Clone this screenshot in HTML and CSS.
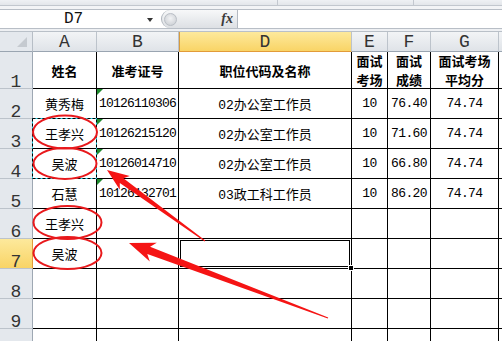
FILE: index.html
```html
<!DOCTYPE html>
<html lang="zh">
<head>
    <meta charset="UTF-8">
    <title>成绩表</title>
    <link rel="stylesheet" href="styles.css">
</head>
<body>
<div class="app">
    <div class="topstrip">
        <div class="seg seg1"></div>
        <div class="seg seg2"></div>
    </div>
    <div class="gap"></div>
    <div class="formula-bar">
        <div class="namebox"><span class="namebox-text">D7</span><span class="drop"></span></div>
        <div class="fx-pill"><span class="knob"></span><span class="fx">fx</span></div>
        <div class="formula-input"></div>
    </div>
    <div class="strip2"></div>

    <div class="sheet">
        <div class="corner"></div>
        <div class="ch">A</div>
        <div class="ch">B</div>
        <div class="ch sel">D</div>
        <div class="ch">E</div>
        <div class="ch">F</div>
        <div class="ch">G</div>
        <div class="ch last"></div>

        <div class="rh">1</div>
        <div class="c head">姓名</div>
        <div class="c head">准考证号</div>
        <div class="c head">职位代码及名称</div>
        <div class="c head">面试<br>考场</div>
        <div class="c head">面试<br>成绩</div>
        <div class="c head">面试考场<br>平均分</div>
        <div class="c last"></div>

        <div class="rh">2</div>
        <div class="c">黄秀梅</div>
        <div class="c id flag">10126110306</div>
        <div class="c mix">02办公室工作员</div>
        <div class="c num">10</div>
        <div class="c num">76.40</div>
        <div class="c num">74.74</div>
        <div class="c last"></div>

        <div class="rh">3</div>
        <div class="c">王孝兴</div>
        <div class="c id flag">10126215120</div>
        <div class="c mix">02办公室工作员</div>
        <div class="c num">10</div>
        <div class="c num">71.60</div>
        <div class="c num">74.74</div>
        <div class="c last"></div>

        <div class="rh">4</div>
        <div class="c">吴波</div>
        <div class="c id flag">10126014710</div>
        <div class="c mix">02办公室工作员</div>
        <div class="c num">10</div>
        <div class="c num">66.80</div>
        <div class="c num">74.74</div>
        <div class="c last"></div>

        <div class="rh">5</div>
        <div class="c">石慧</div>
        <div class="c id flag">10126132701</div>
        <div class="c mix">03政工科工作员</div>
        <div class="c num">10</div>
        <div class="c num">86.20</div>
        <div class="c num">74.74</div>
        <div class="c last"></div>

        <div class="rh">6</div>
        <div class="c">王孝兴</div>
        <div class="c"></div>
        <div class="c"></div>
        <div class="c"></div>
        <div class="c"></div>
        <div class="c"></div>
        <div class="c last"></div>

        <div class="rh sel">7</div>
        <div class="c">吴波</div>
        <div class="c"></div>
        <div class="c"></div>
        <div class="c"></div>
        <div class="c"></div>
        <div class="c"></div>
        <div class="c last"></div>

        <div class="rh">8</div>
        <div class="c"></div>
        <div class="c"></div>
        <div class="c"></div>
        <div class="c"></div>
        <div class="c"></div>
        <div class="c"></div>
        <div class="c last"></div>

        <div class="rh">9</div>
        <div class="c"></div>
        <div class="c"></div>
        <div class="c"></div>
        <div class="c"></div>
        <div class="c"></div>
        <div class="c"></div>
        <div class="c last"></div>

        <div class="rh"></div>
        <div class="c"></div>
        <div class="c"></div>
        <div class="c"></div>
        <div class="c"></div>
        <div class="c"></div>
        <div class="c"></div>
        <div class="c last"></div>
    </div>

    <!-- annotations drawn over the sheet -->
    <svg class="marks" width="502" height="341" viewBox="0 0 502 341">
        <rect x="32.5" y="118.5" width="64" height="60" fill="none" stroke="#27d4e8"/>
        <rect x="32.5" y="118.5" width="64" height="60" fill="none" stroke="#000" stroke-dasharray="3 2"/>

        <rect x="179.5" y="239.5" width="171" height="28" fill="none" stroke="#fff"/>
        <rect x="178.5" y="238.5" width="173" height="30" fill="none" stroke="#000"/>
        <rect x="180.5" y="240.5" width="169" height="26" fill="none" stroke="#000"/>
        <rect x="348.5" y="265.5" width="5" height="5" fill="#000" stroke="#fff"/>

        <g fill="none" stroke="#e8191c" stroke-width="2">
            <ellipse cx="65" cy="132" rx="32" ry="16.5"/>
            <ellipse cx="65" cy="163.5" rx="31.5" ry="15.5"/>
            <ellipse cx="67.5" cy="222.5" rx="34" ry="16.5"/>
            <ellipse cx="67.5" cy="253" rx="34" ry="16"/>
        </g>

        <g fill="#f51414">
            <polygon points="107,170 129.8,176 123.4,178.2 205.3,240.6 204.7,241.4 119.8,183 119.8,189.8"/>
            <polygon points="129,243 156.8,242.8 150.1,246.7 328.2,317.5 327.8,318.5 147.3,254.1 149.8,261.6"/>
        </g>
    </svg>
</div>
</body>
</html>
```

FILE: styles.css
```css
body {
    margin: 0;
    background: #fff;
    font-family: "Noto Sans CJK SC", sans-serif;
}
.app {
    position: relative;
    width: 502px;
    height: 341px;
    overflow: hidden;
    background: #fff;
}
.topstrip {
    display: flex;
    height: 6px;
    box-sizing: border-box;
    border-bottom: 1px solid #c2c7ce;
    background: linear-gradient(#eff1f4, #e3e6ea);
}
.seg {
    box-sizing: border-box;
    border-right: 1px solid #c3c8cf;
}
.seg1 { width: 278px; }
.seg2 { width: 136px; }
.gap {
    height: 3px;
    background: #f3f4f6;
}
.formula-bar {
    display: flex;
    height: 20px;
    box-sizing: border-box;
    border-top: 1px solid #b8bec6;
    border-bottom: 1px solid #b8bec6;
    background: #fff;
}
.namebox {
    width: 161px;
    display: flex;
    align-items: center;
}
.namebox-text {
    flex: 1;
    text-align: center;
    font: 16px "Liberation Mono", monospace;
    color: #111;
    line-height: 18px;
}
.drop {
    width: 0;
    height: 0;
    border-left: 3px solid transparent;
    border-right: 3px solid transparent;
    border-top: 4px solid #333;
    margin: 1px 8px 0 0;
}
.fx-pill {
    width: 77px;
    box-sizing: border-box;
    border-left: 1px solid #aeb4bc;
    border-right: 1px solid #b3b9c1;
    border-radius: 10px 0 0 10px;
    background: linear-gradient(#f7f8f9, #dde0e4);
    display: flex;
    align-items: center;
    justify-content: space-between;
    padding: 0 4px 0 2px;
}
.knob {
    width: 11px;
    height: 11px;
    border-radius: 50%;
    background: radial-gradient(circle at 50% 40%, #f2f3f5, #c6cacf);
    border: 1px solid #b9bec5;
}
.fx {
    font: italic bold 14px "Liberation Serif", serif;
    color: #3a3a3a;
}
.formula-input {
    flex: 1;
}
.strip2 {
    height: 3px;
    box-sizing: border-box;
    border-bottom: 1px solid #b9c0c8;
    background: #eef0f3;
}
.sheet {
    display: grid;
    grid-template-columns: 33px 64px 82px 173px 36px 43px 68px 1fr;
    grid-template-rows: 20px 37px repeat(9, 30px);
}
.sheet > div {
    box-sizing: border-box;
    position: relative;
}
.corner {
    background: #e4e8ed;
    border-right: 1px solid #b7bec6;
    border-bottom: 1px solid #9aa5b1;
}
.corner::after {
    content: "";
    position: absolute;
    right: 5px;
    bottom: 4px;
    width: 10px;
    height: 10px;
    background: #c5cad0;
    clip-path: polygon(100% 0, 100% 100%, 0 100%);
}
.ch {
    background: linear-gradient(#f2f4f6, #dfe3e8);
    border-right: 1px solid #bcc3cb;
    border-bottom: 1px solid #9aa5b1;
    display: flex;
    align-items: center;
    justify-content: center;
    font: 18px "Liberation Mono", monospace;
    line-height: 18px;
    color: #333;
}
.ch.sel {
    background: linear-gradient(#fde99c, #f9d466);
    border-bottom: 1px solid #e29b39;
    box-shadow: inset 1px 0 #d69b3e;
}
.ch.last {
    border-right: none;
}
.rh {
    background: #e4e8ed;
    border-right: 1px solid #9ea8b3;
    border-bottom: 1px solid #bcc3cb;
    display: flex;
    align-items: flex-end;
    justify-content: center;
    font: 18px "Liberation Mono", monospace;
    line-height: 12px;
    color: #333;
}
.rh.sel {
    background: linear-gradient(#fde99c, #f9d466);
    border-right: 1px solid #e29b39;
}
.c {
    border-right: 1px solid #000;
    border-bottom: 1px solid #000;
    display: flex;
    align-items: center;
    justify-content: center;
    font-size: 13px;
    color: #000;
    white-space: nowrap;
}
.c.last {
    border-right: none;
}
.head {
    font-weight: 700;
    line-height: 19px;
    text-align: center;
}
.id {
    justify-content: flex-start;
    padding-left: 2px;
    font-family: "Liberation Mono", monospace;
    letter-spacing: -0.8px;
}
.num {
    font-family: "Liberation Mono", monospace;
    letter-spacing: -0.6px;
}
.mix {
    font-family: "Liberation Mono", "Noto Sans CJK SC", monospace;
}
.flag::before {
    content: "";
    position: absolute;
    left: 0;
    top: 0;
    width: 6px;
    height: 6px;
    background: #1f8a2e;
    clip-path: polygon(0 0, 100% 0, 0 100%);
}
.marks {
    position: absolute;
    left: 0;
    top: 0;
    pointer-events: none;
}
```
